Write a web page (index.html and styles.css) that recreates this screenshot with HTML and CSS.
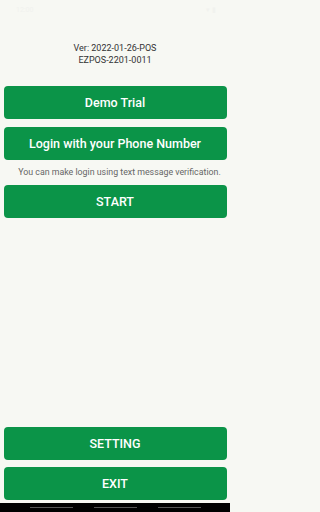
FILE: index.html
```html
<!DOCTYPE html>
<html>
<head>
<meta charset="utf-8">
<link rel="stylesheet" href="styles.css">
</head>
<body>
<div class="screen">
  <div class="status">
    <span class="status-time">12:00</span>
    <span class="status-icons">▾ ▮</span>
  </div>
  <div class="version">
    <div>Ver: 2022-01-26-POS</div>
    <div>EZPOS-2201-0011</div>
  </div>
  <div class="top-actions">
    <button class="btn">Demo Trial</button>
    <button class="btn">Login with your Phone Number</button>
    <div class="hint">You can make login using text message verification.</div>
    <button class="btn">START</button>
  </div>
  <div class="spacer"></div>
  <div class="bottom-actions">
    <button class="btn">SETTING</button>
    <button class="btn">EXIT</button>
  </div>
  <div class="navbar">
    <span class="nav-line"></span>
    <span class="nav-line"></span>
    <span class="nav-line"></span>
  </div>
</div>
</body>
</html>
```
FILE: styles.css
```css
html, body {
  margin: 0;
  padding: 0;
  background: #f7f8f3;
}
.screen {
  width: 230px;
  height: 512px;
  display: flex;
  flex-direction: column;
  font-family: Roboto, "Noto Sans", sans-serif;
  background: #f7f8f3;
  overflow: hidden;
}
.status {
  height: 20px;
  display: flex;
  justify-content: space-between;
  align-items: center;
  padding: 0 14px 0 16px;
  font-size: 7px;
  color: #f1f2ee;
}
.version {
  margin-top: 22px;
  text-align: center;
  font-size: 9px;
  line-height: 12px;
  color: #333;
}
.top-actions {
  margin-top: 20px;
  display: flex;
  flex-direction: column;
  padding: 0 3.5px;
}
.btn {
  display: block;
  width: 100%;
  height: 33px;
  border: none;
  border-radius: 4px;
  background: #0b9448;
  color: #fff;
  font-family: Roboto, "Noto Sans", sans-serif;
  font-weight: 500;
  font-size: 12.5px;
  padding: 0;
  margin: 0;
}
.top-actions .btn + .btn {
  margin-top: 7.5px;
}
.hint {
  height: 25px;
  line-height: 25px;
  text-align: center;
  font-size: 8.8px;
  color: #666;
  padding-left: 9px;
  white-space: nowrap;
}
.spacer {
  flex: 1;
}
.bottom-actions {
  display: flex;
  flex-direction: column;
  gap: 7.5px;
  padding: 0 3.5px;
  margin-bottom: 2.5px;
}
.navbar {
  height: 9.5px;
  background: #000;
  display: flex;
  justify-content: center;
  align-items: center;
  gap: 21px;
}
.nav-line {
  width: 43px;
  height: 1px;
  background: #555;
}
```
